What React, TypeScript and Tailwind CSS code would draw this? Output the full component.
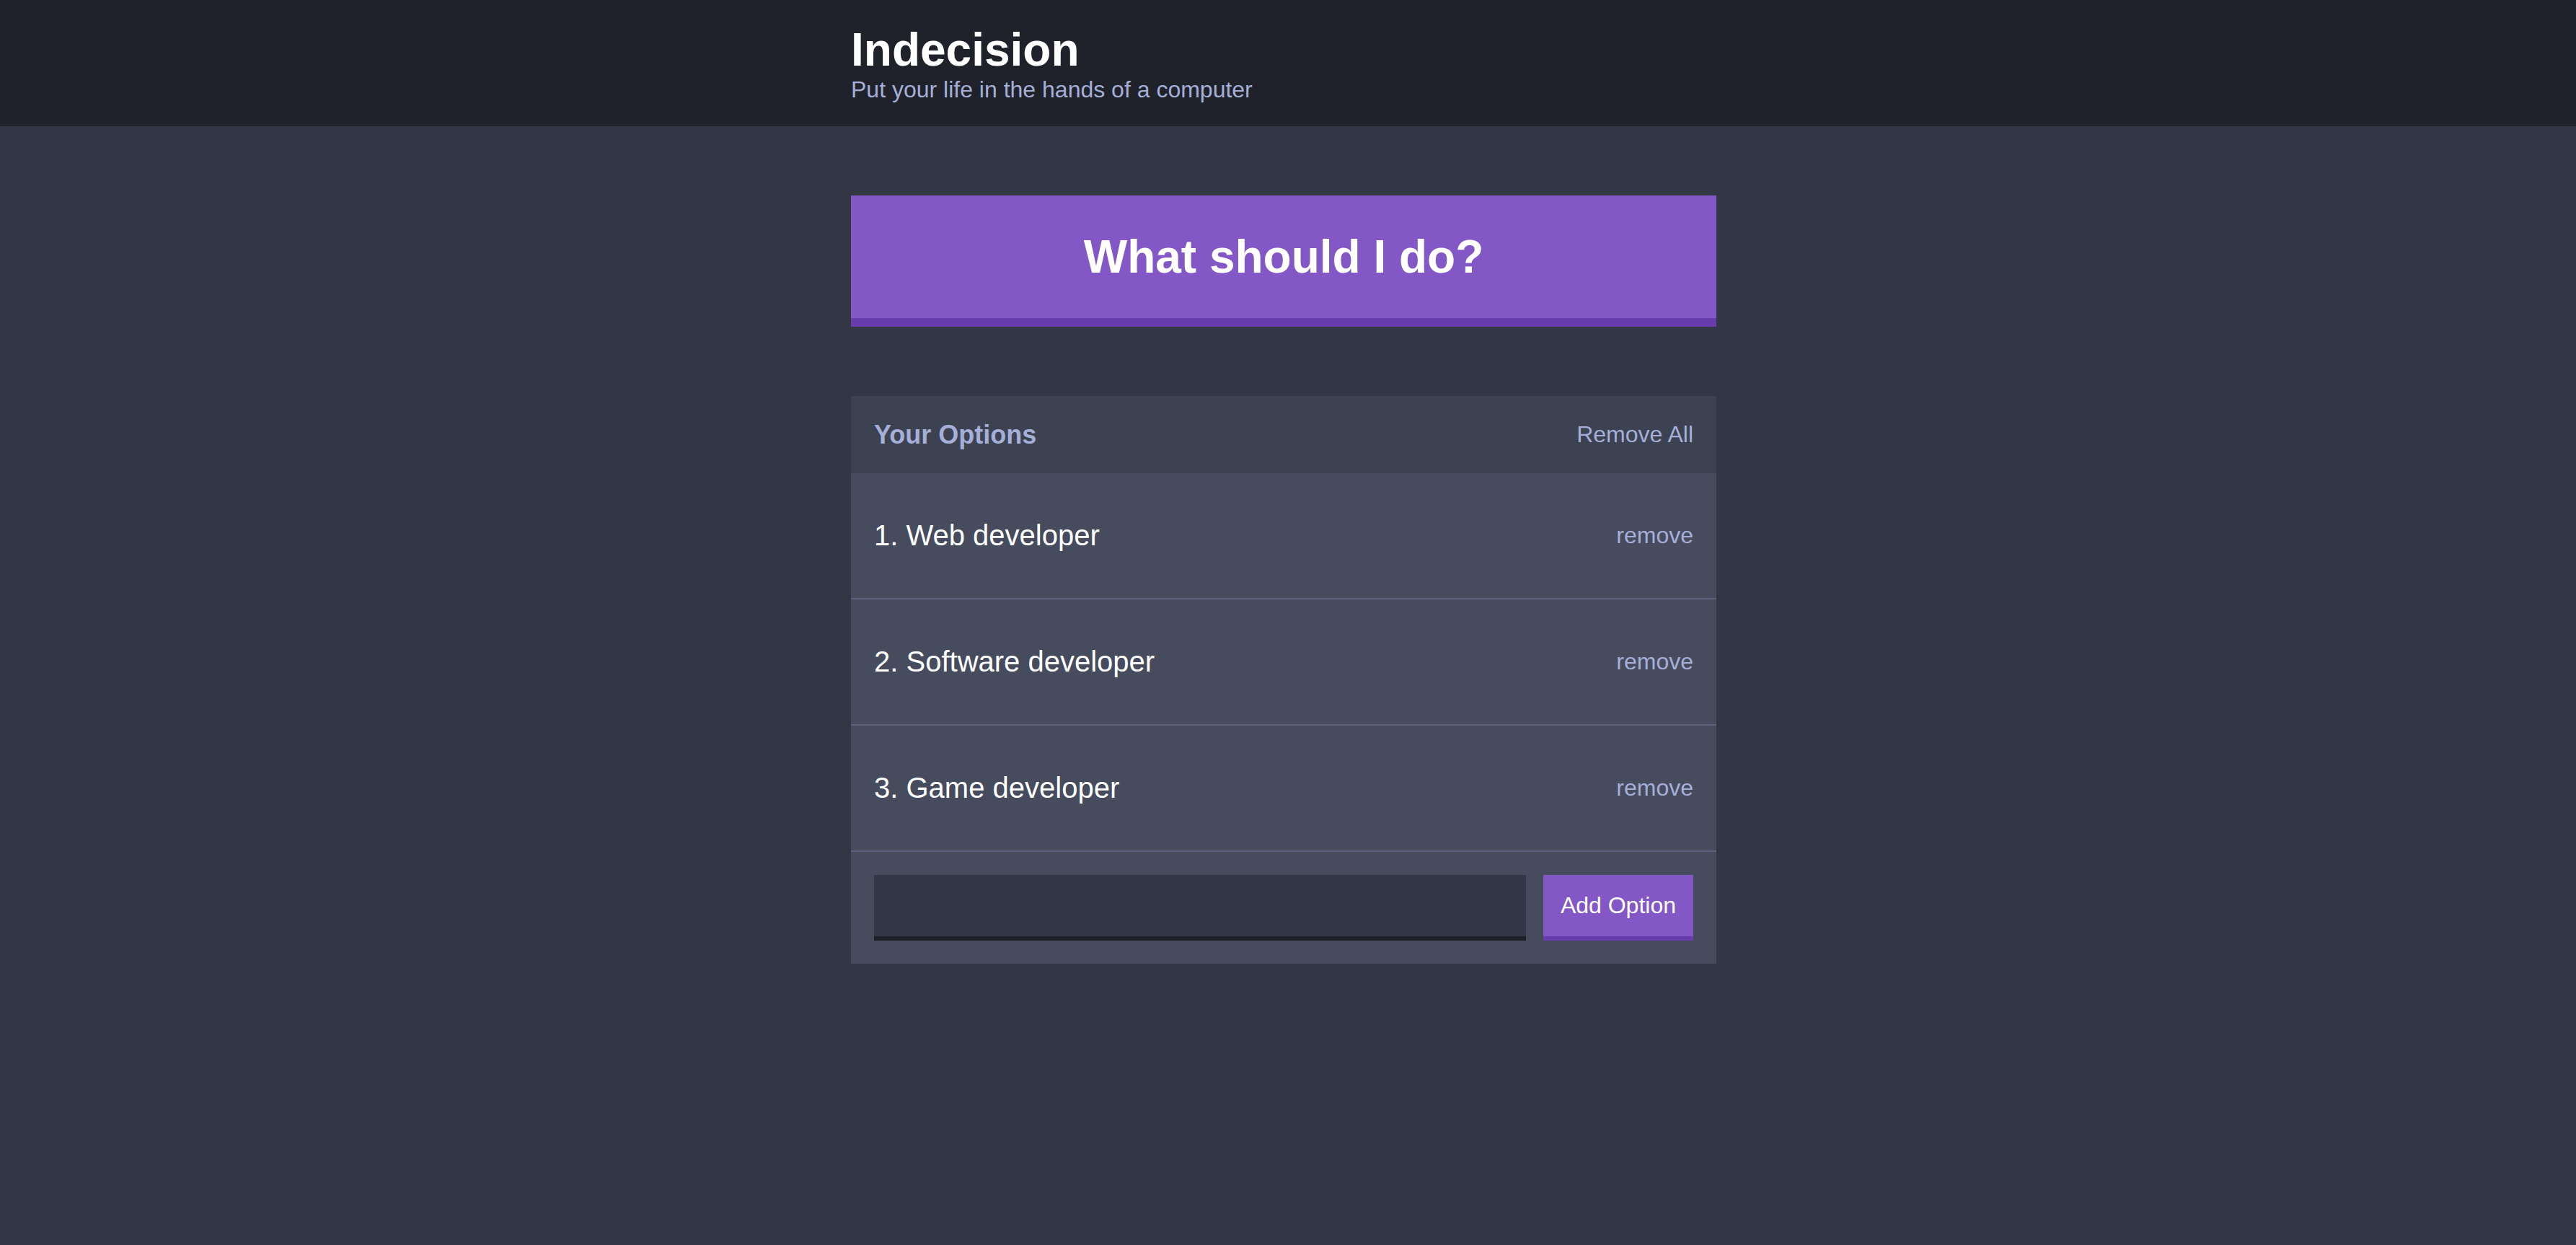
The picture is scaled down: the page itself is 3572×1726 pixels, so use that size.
import React from "react";

const options = ["Web developer", "Software developer", "Game developer"];

const App = () => {
  return (
    <div
      className="min-h-screen bg-[#333745] leading-[normal] text-white"
      style={{ fontFamily: '"Liberation Sans", Arial, sans-serif' }}
    >
      <header className="bg-[#20222b] py-8 pr-3">
        <div className="mx-auto max-w-[1200px]">
          <h1 className="m-0 text-[64px] font-bold leading-[normal]">Indecision</h1>
          <h2 className="m-0 text-[32px] font-medium leading-[normal] text-[#a5afd7]">
            Put your life in the hands of a computer
          </h2>
        </div>
      </header>

      <main className="pr-3">
        <div className="mx-auto max-w-[1200px] pt-24">
          <button className="mb-24 block w-full border-b-[12px] border-[#693cad] bg-[#8357c5] py-12 text-[64px] font-bold leading-[normal] text-white">
            What should I do?
          </button>

          <div className="bg-[#464b5e]">
            <div className="flex items-center justify-between bg-[#3c4251] p-8">
              <h3 className="m-0 text-[36px] font-bold leading-[43px] text-[#a5afd7]">
                Your Options
              </h3>
              <button className="text-[32px] leading-[normal] text-[#a5afd7]">
                Remove All
              </button>
            </div>

            {options.map((option, i) => (
              <div
                key={option}
                className="flex items-center justify-between border-b-2 border-[#5c627b] px-8 py-16"
              >
                <p className="m-0 text-[40px] leading-[normal] text-white">
                  {i + 1}. {option}
                </p>
                <button className="text-[32px] leading-[normal] text-[#a5afd7]">
                  remove
                </button>
              </div>
            ))}

            <form className="flex gap-6 p-8" onSubmit={(e) => e.preventDefault()}>
              <input
                type="text"
                name="option"
                className="flex-1 border-b-[6px] border-[#1f2028] bg-[#333745] p-6 text-[32px] leading-[normal] text-[#a5afd7] outline-none"
              />
              <button className="border-b-[6px] border-[#693cad] bg-[#8357c5] px-6 text-[32px] leading-[normal] text-white">
                Add Option
              </button>
            </form>
          </div>
        </div>
      </main>
    </div>
  );
};

export default App;
